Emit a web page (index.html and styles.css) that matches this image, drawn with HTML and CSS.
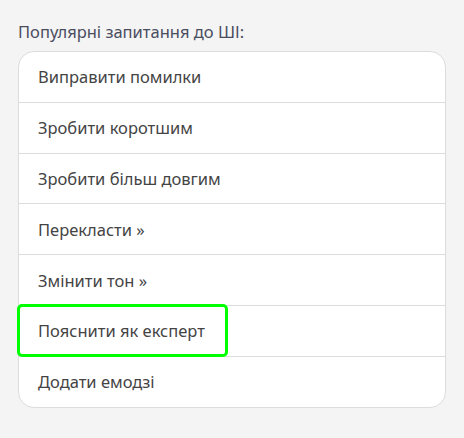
FILE: index.html
```html
<!DOCTYPE html>
<html lang="uk">
<head>
<meta charset="utf-8">
<link rel="stylesheet" href="styles.css">
</head>
<body>
<div class="page">
  <div class="title">Популярні запитання до ШІ:</div>
  <ul class="list">
    <li class="item">Виправити помилки</li>
    <li class="item">Зробити коротшим</li>
    <li class="item">Зробити більш довгим</li>
    <li class="item">Перекласти »</li>
    <li class="item">Змінити тон »</li>
    <li class="item highlighted"><span class="label">Пояснити як експерт</span><span class="mark"></span></li>
    <li class="item">Додати емодзі</li>
  </ul>
</div>
</body>
</html>
```
FILE: styles.css
```css
html, body {
  margin: 0;
  padding: 0;
  background: #f4f4f4;
}
.page {
  width: 464px;
  height: 438px;
  box-sizing: border-box;
  padding: 21px 18px 0 18px;
  font-family: "Noto Sans", "Open Sans", sans-serif;
}
.title {
  font-size: 16.5px;
  line-height: 22px;
  color: #4a4d60;
  margin-bottom: 8px;
}
.list {
  list-style: none;
  margin: 0;
  padding: 0;
  background: #fff;
  border: 1px solid #dcdcdc;
  border-radius: 16px;
  width: 428px;
  box-sizing: border-box;
}
.item {
  position: relative;
  height: 50.8px;
  box-sizing: border-box;
  display: flex;
  align-items: center;
  padding-left: 19px;
  font-size: 16.5px;
  color: #444444;
  border-bottom: 1px solid #dcdcdc;
}
.item:last-child {
  border-bottom: none;
  height: 50px;
}
.mark {
  position: absolute;
  left: -2px;
  top: -2px;
  width: 211px;
  height: 53px;
  box-sizing: border-box;
  border: 3.5px solid #00ff00;
  border-radius: 5px;
}
```
